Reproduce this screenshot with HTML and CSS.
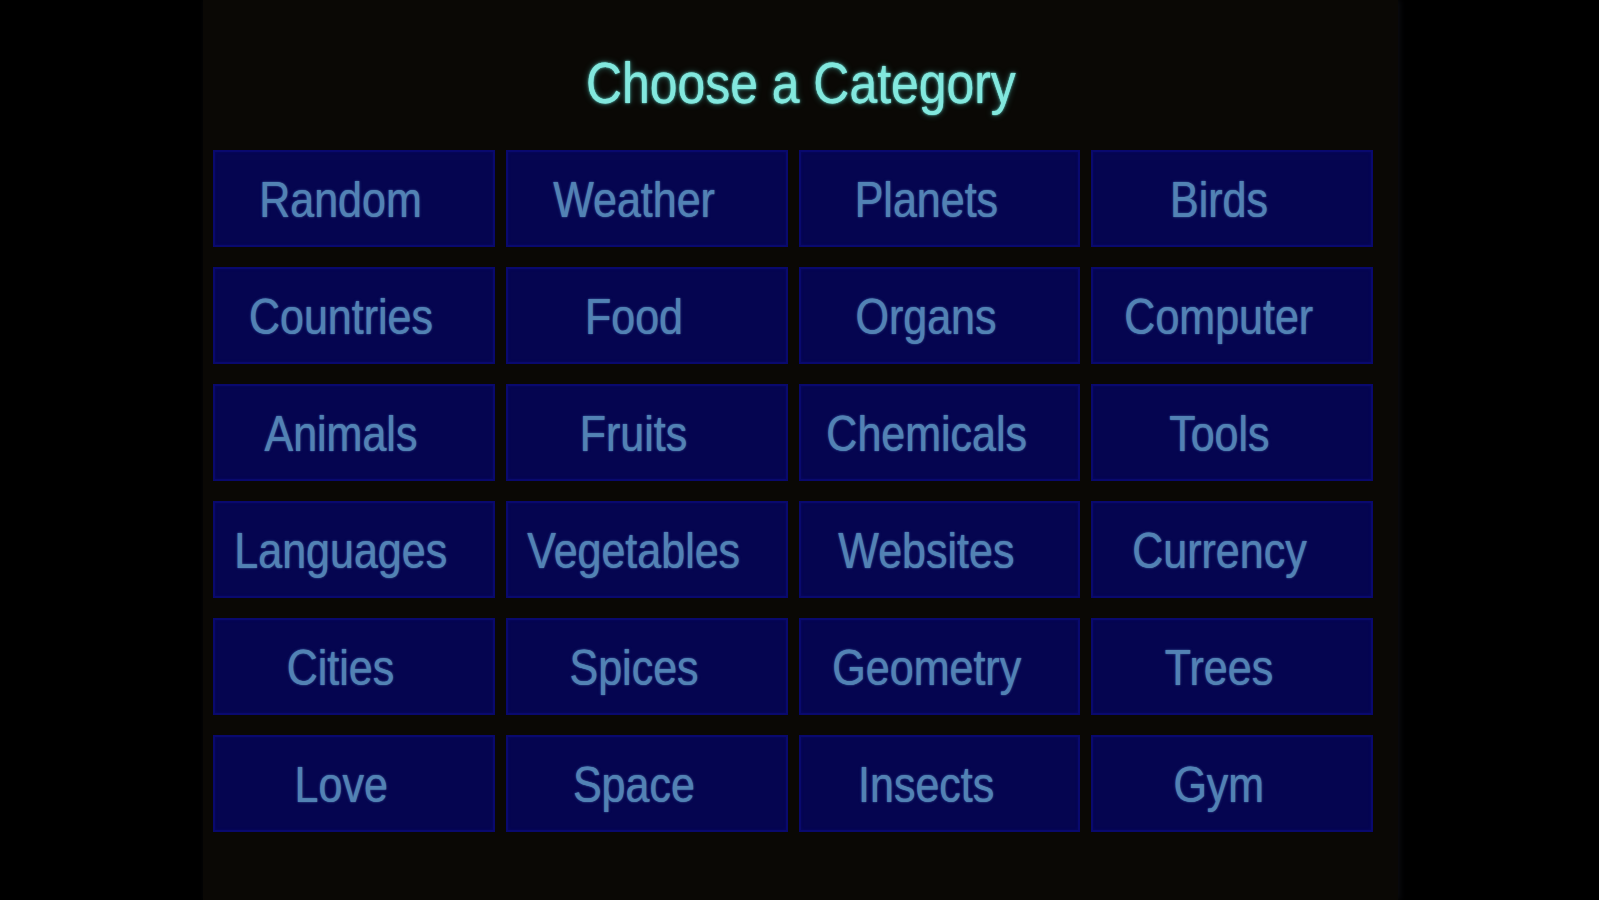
FILE: index.html
```html
<!DOCTYPE html>
<html lang="en">
<head>
<meta charset="utf-8">
<title>Choose a Category</title>
<link rel="stylesheet" href="styles.css">
</head>
<body>
<main class="panel">
  <h1 class="title"><span class="squeeze">Choose a Category</span></h1>
  <div class="grid">
    <button class="cat"><span class="squeeze">Random</span></button>
    <button class="cat"><span class="squeeze">Weather</span></button>
    <button class="cat"><span class="squeeze">Planets</span></button>
    <button class="cat"><span class="squeeze">Birds</span></button>
    <button class="cat"><span class="squeeze">Countries</span></button>
    <button class="cat"><span class="squeeze">Food</span></button>
    <button class="cat"><span class="squeeze">Organs</span></button>
    <button class="cat"><span class="squeeze">Computer</span></button>
    <button class="cat"><span class="squeeze">Animals</span></button>
    <button class="cat"><span class="squeeze">Fruits</span></button>
    <button class="cat"><span class="squeeze">Chemicals</span></button>
    <button class="cat"><span class="squeeze">Tools</span></button>
    <button class="cat"><span class="squeeze">Languages</span></button>
    <button class="cat"><span class="squeeze">Vegetables</span></button>
    <button class="cat"><span class="squeeze">Websites</span></button>
    <button class="cat"><span class="squeeze">Currency</span></button>
    <button class="cat"><span class="squeeze">Cities</span></button>
    <button class="cat"><span class="squeeze">Spices</span></button>
    <button class="cat"><span class="squeeze">Geometry</span></button>
    <button class="cat"><span class="squeeze">Trees</span></button>
    <button class="cat"><span class="squeeze">Love</span></button>
    <button class="cat"><span class="squeeze">Space</span></button>
    <button class="cat"><span class="squeeze">Insects</span></button>
    <button class="cat"><span class="squeeze">Gym</span></button>
  </div>
</main>
</body>
</html>
```

FILE: styles.css
```css
html, body {
  margin: 0;
  padding: 0;
  background: #000;
  height: 100%;
  overflow: hidden;
}

body {
  font-family: "Liberation Sans", Arial, sans-serif;
}

.panel {
  margin-left: 203px;
  width: 1195px;
  height: 900px;
  background: #0a0805;
  box-shadow: 2px 0 6px rgba(20, 22, 30, 0.6);
  display: flex;
  flex-direction: column;
  align-items: stretch;
}

.squeeze {
  display: inline-block;
  transform: scaleX(0.86);
  white-space: nowrap;
}

.title {
  margin: 54px 0 38px 0;
  font-size: 58px;
  line-height: 58px;
  font-weight: normal;
  text-align: center;
  color: #82e8de;
  text-shadow: 0 0 1px rgba(130, 232, 222, 0.9), 0 0 3px rgba(110, 235, 225, 0.8), 0 0 8px rgba(90, 220, 210, 0.4);
}

.grid {
  margin: 0 25px 0 10px;
  display: grid;
  grid-template-columns: repeat(4, 1fr);
  grid-auto-rows: 97px;
  column-gap: 11px;
  row-gap: 20px;
}

.cat {
  box-sizing: border-box;
  margin: 0;
  padding: 3px 26px 0 0;
  border: 2px solid #09096e;
  background: #050550;
  box-shadow: inset 0 0 3px rgba(10, 10, 120, 0.5);
  font-family: "Liberation Sans", Arial, sans-serif;
  font-size: 50px;
  line-height: 1;
  color: #5282b4;
  text-shadow: 0 0 1px rgba(82, 130, 180, 0.9), 0 0 3px rgba(90, 140, 200, 0.5);
  display: flex;
  align-items: center;
  justify-content: center;
  cursor: pointer;
}
```
